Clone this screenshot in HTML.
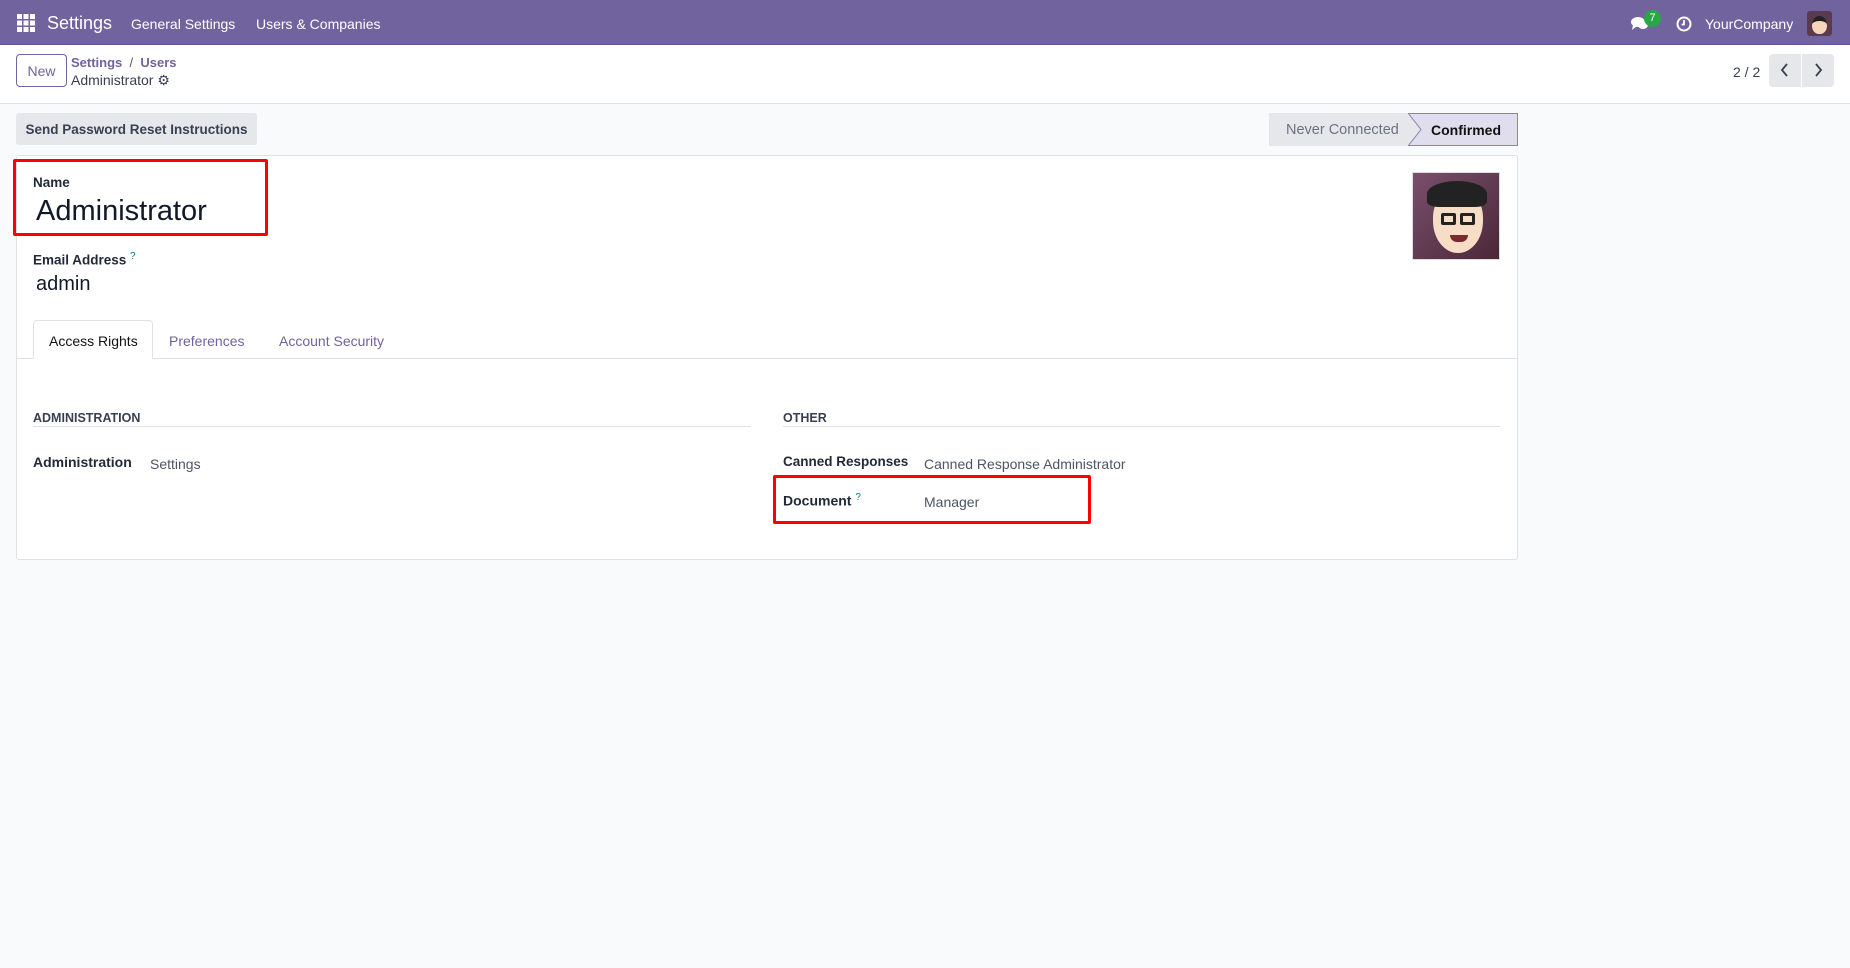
<!DOCTYPE html>
<html><head><meta charset="utf-8"><style>
*{box-sizing:border-box;margin:0;padding:0}
body{width:1850px;height:968px;background:#f9fafb;font-family:"Liberation Sans",sans-serif;color:#374151;font-size:14px;position:relative;overflow:hidden}
.a{position:absolute;white-space:nowrap}
.nav{left:0;top:0;width:1850px;height:45px;background:#71639e;border-bottom:1px solid #5f5390}
.cp{left:0;top:45px;width:1850px;height:59px;background:#fff;border-bottom:1px solid #dee2e6}
.b{font-weight:bold;color:#1f2937}
.red{border:3px solid #f00;border-radius:2px}
</style></head><body>
<div class="a nav"></div>
<svg class="a" style="left:17px;top:14px" width="18" height="18" viewBox="0 0 18 18" fill="#fff"><rect x="0" y="0" width="5" height="5"/><rect x="6.5" y="0" width="5" height="5"/><rect x="13" y="0" width="5" height="5"/><rect x="0" y="6.5" width="5" height="5"/><rect x="6.5" y="6.5" width="5" height="5"/><rect x="13" y="6.5" width="5" height="5"/><rect x="0" y="13" width="5" height="5"/><rect x="6.5" y="13" width="5" height="5"/><rect x="13" y="13" width="5" height="5"/></svg>
<div class="a" style="left:47px;top:13px;font-size:18px;color:#fff">Settings</div>
<div class="a" style="left:131px;top:16px;font-size:14px;color:#fff">General Settings</div>
<div class="a" style="left:256px;top:16px;font-size:14px;color:#fff">Users &amp; Companies</div>
<svg class="a" style="left:1630px;top:15px" width="20" height="18" viewBox="0 0 20 18" fill="#fff"><ellipse cx="8" cy="7" rx="7" ry="5"/><path d="M3 10 L2 15 L7 11Z"/><ellipse cx="13" cy="10" rx="5" ry="4" fill="#fff"/></svg>
<div class="a" style="left:1644px;top:10px;width:17px;height:17px;border-radius:50%;background:#28a745;color:#fff;font-size:11px;text-align:center;line-height:17px">7</div>
<svg class="a" style="left:1676px;top:16px" width="16" height="16" viewBox="0 0 16 16"><circle cx="8" cy="8" r="6.5" fill="none" stroke="#fff" stroke-width="2"/><path d="M8 4v4.5H5.5" stroke="#fff" stroke-width="1.8" fill="none"/></svg>
<div class="a" style="left:1705px;top:16px;font-size:14px;color:#fff">YourCompany</div>
<div class="a" style="left:1807px;top:11px;width:25px;height:25px;border-radius:3px;background:#5a3a4e;overflow:hidden"><div style="margin:5px 0 0 5px;width:15px;height:18px;border-radius:50% 50% 45% 45%;background:#f6d5b8;border-top:5px solid #222"></div></div>

<div class="a cp"></div>
<div class="a" style="left:16px;top:54px;width:51px;height:33px;border:1px solid #71639e;border-radius:4px;color:#71639e;font-size:14px;text-align:center;line-height:33px">New</div>
<div class="a" style="left:71px;top:55px;font-size:13px;color:#71639e;font-weight:bold">Settings&nbsp;&nbsp;<span style="color:#4b5563;font-weight:normal">/</span>&nbsp;&nbsp;Users</div>
<div class="a" style="left:71px;top:72px;font-size:14px;color:#374151">Administrator <span style="font-size:14px">⚙</span></div>
<div class="a" style="left:1733px;top:64px;font-size:14px;color:#374151">2 / 2</div>
<div class="a" style="left:1769px;top:54px;width:32px;height:33px;background:#e5e7eb;border-radius:4px 0 0 4px"></div>
<div class="a" style="left:1802px;top:54px;width:32px;height:33px;background:#e5e7eb;border-radius:0 4px 4px 0"></div>
<svg class="a" style="left:1779px;top:62px" width="12" height="16" viewBox="0 0 12 16"><path d="M8 2L3 8l5 6" stroke="#374151" stroke-width="1.8" fill="none"/></svg>
<svg class="a" style="left:1812px;top:62px" width="12" height="16" viewBox="0 0 12 16"><path d="M4 2l5 6-5 6" stroke="#374151" stroke-width="1.8" fill="none"/></svg>

<div class="a" style="left:16px;top:113px;width:241px;height:32px;background:#e5e7eb;border-radius:3px;font-weight:bold;font-size:13.5px;color:#374151;text-align:center;line-height:34px">Send Password Reset Instructions</div>
<div class="a" style="left:1269px;top:113px;width:249px;height:33px;background:#e0deec;border:1px solid #8a80b5;border-left:none"></div>
<div class="a" style="left:1269px;top:113px;width:140px;height:33px;background:#e5e7eb"></div>
<svg class="a" style="left:1408px;top:113px" width="14" height="33" viewBox="0 0 14 33"><path d="M0 0L13 16.5L0 33Z" fill="#e5e7eb"/><path d="M0 0L13 16.5L0 33" stroke="#8a80b5" fill="none"/></svg>
<div class="a" style="left:1286px;top:122px;font-size:14.5px;color:#6b7280">Never Connected</div>
<div class="a b" style="left:1431px;top:122px;font-size:14px;color:#111">Confirmed</div>

<div class="a" style="left:16px;top:155px;width:1502px;height:405px;background:#fff;border:1px solid #dee2e6;border-radius:3px"></div>
<div class="a red" style="left:13px;top:159px;width:255px;height:77px"></div>
<div class="a b" style="left:33px;top:175px;font-size:13.5px">Name</div>
<div class="a" style="left:36px;top:195px;font-size:29px;color:#111827">Administrator</div>
<div class="a b" style="left:33px;top:251px;font-size:13.5px">Email Address <sup style="color:#017e84;font-size:10px;font-weight:normal">?</sup></div>
<div class="a" style="left:36px;top:273px;font-size:20px;color:#111827">admin</div>
<div class="a" style="left:1412px;top:172px;width:88px;height:88px;background:linear-gradient(135deg,#7a4f6c,#4a2838);border:1px solid #ddd;overflow:hidden">
<div style="position:absolute;left:20px;top:16px;width:50px;height:64px;border-radius:45% 45% 50% 50%;background:#f7dcc6"></div>
<div style="position:absolute;left:14px;top:8px;width:60px;height:26px;border-radius:50% 50% 20% 20%;background:#222"></div>
<div style="position:absolute;left:28px;top:40px;width:15px;height:12px;border:3px solid #222;border-radius:2px"></div>
<div style="position:absolute;left:47px;top:40px;width:15px;height:12px;border:3px solid #222;border-radius:2px"></div>
<div style="position:absolute;left:37px;top:62px;width:18px;height:7px;border-radius:0 0 10px 10px;background:#7a2a2a"></div>
</div>

<div class="a" style="left:17px;top:358px;width:1500px;height:1px;background:#dee2e6"></div>
<div class="a" style="left:33px;top:320px;width:120px;height:39px;background:#fff;border:1px solid #dee2e6;border-bottom:1px solid #fff;border-radius:4px 4px 0 0"></div>
<div class="a" style="left:49px;top:333px;font-size:14px;color:#111">Access Rights</div>
<div class="a" style="left:169px;top:333px;font-size:14px;color:#71639e">Preferences</div>
<div class="a" style="left:279px;top:333px;font-size:14px;color:#71639e">Account Security</div>

<div class="a b" style="left:33px;top:411px;font-size:12.5px;color:#374151">ADMINISTRATION</div>
<div class="a" style="left:33px;top:426px;width:718px;height:1px;background:#dee2e6"></div>
<div class="a b" style="left:783px;top:411px;font-size:12.5px;color:#374151">OTHER</div>
<div class="a" style="left:783px;top:426px;width:717px;height:1px;background:#dee2e6"></div>

<div class="a b" style="left:33px;top:454px;font-size:14px">Administration</div>
<div class="a" style="left:150px;top:456px;font-size:14px;color:#4b5563">Settings</div>
<div class="a b" style="left:783px;top:454px;font-size:13.5px">Canned Responses</div>
<div class="a" style="left:924px;top:456px;font-size:14px;color:#4b5563">Canned Response Administrator</div>
<div class="a red" style="left:773px;top:475px;width:318px;height:49px"></div>
<div class="a b" style="left:783px;top:492px;font-size:14px">Document <sup style="color:#017e84;font-size:10px;font-weight:normal">?</sup></div>
<div class="a" style="left:924px;top:494px;font-size:14px;color:#4b5563">Manager</div>
</body></html>
